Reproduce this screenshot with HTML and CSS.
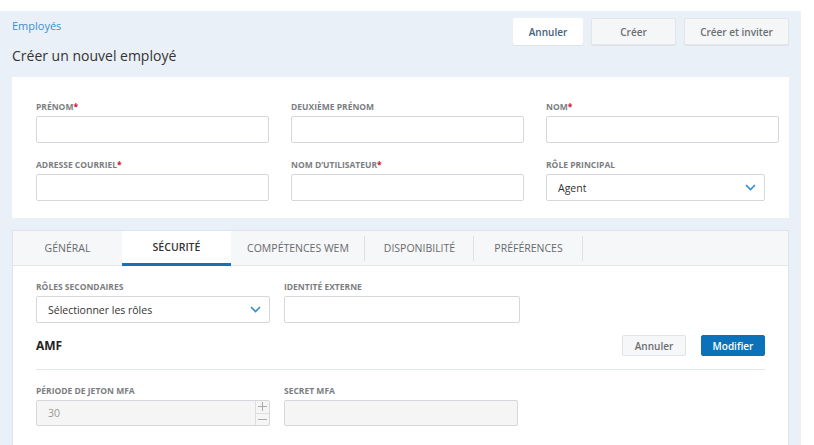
FILE: index.html
```html
<!DOCTYPE html>
<html lang="fr">
<head>
<meta charset="utf-8">
<title>Créer un nouvel employé</title>
<link rel="stylesheet" href="styles.css">
</head>
<body>
<div class="page">
  <header class="top">
    <div class="titles">
      <a class="crumb" href="#">Employés</a>
      <h1 class="title">Créer un nouvel employé</h1>
    </div>
    <div class="actions">
      <button class="btn btn-white btn-cancel">Annuler</button>
      <button class="btn btn-grey btn-create">Créer</button>
      <button class="btn btn-grey btn-invite">Créer et inviter</button>
    </div>
  </header>

  <section class="card card-main">
    <div class="grid3">
      <div class="field">
        <label class="lbl">Prénom<span class="req">*</span></label>
        <div class="input"></div>
      </div>
      <div class="field">
        <label class="lbl">Deuxième prénom</label>
        <div class="input"></div>
      </div>
      <div class="field">
        <label class="lbl">Nom<span class="req">*</span></label>
        <div class="input"></div>
      </div>
      <div class="field">
        <label class="lbl">Adresse courriel<span class="req">*</span></label>
        <div class="input"></div>
      </div>
      <div class="field">
        <label class="lbl">Nom d’utilisateur<span class="req">*</span></label>
        <div class="input"></div>
      </div>
      <div class="field">
        <label class="lbl">Rôle principal</label>
        <div class="input select select-role">
          <span class="val">Agent</span>
          <svg class="chev" width="11" height="7" viewBox="0 0 11 7"><path d="M1 1l4.5 4.5L10 1" fill="none" stroke="#2e8fd6" stroke-width="1.6"/></svg>
        </div>
      </div>
    </div>
  </section>

  <section class="card card-tabs">
    <nav class="tabs">
      <div class="tab">Général</div>
      <div class="tab active">Sécurité</div>
      <div class="tab sep wide">Compétences WEM</div>
      <div class="tab sep">Disponibilité</div>
      <div class="tab sep">Préférences</div>
    </nav>
    <div class="tab-body">
      <div class="row2">
        <div class="field f-roles">
          <label class="lbl">Rôles secondaires</label>
          <div class="input select">
            <span class="val">Sélectionner les rôles</span>
            <svg class="chev" width="11" height="7" viewBox="0 0 11 7"><path d="M1 1l4.5 4.5L10 1" fill="none" stroke="#2e8fd6" stroke-width="1.6"/></svg>
          </div>
        </div>
        <div class="field f-ext">
          <label class="lbl">Identité externe</label>
          <div class="input"></div>
        </div>
      </div>
      <div class="amf-row">
        <h2 class="amf">AMF</h2>
        <div class="amf-actions">
          <button class="btn-sm btn-sm-grey">Annuler</button>
          <button class="btn-sm btn-sm-blue">Modifier</button>
        </div>
      </div>
      <hr class="divider">
      <div class="row2">
        <div class="field f-roles">
          <label class="lbl">Période de jeton MFA</label>
          <div class="input disabled spin">
            <span class="val muted">30</span>
            <div class="spinner">
              <span class="sp"><svg width="9" height="9" viewBox="0 0 9 9"><path d="M0 4.5h9M4.5 0v9" stroke="#aaa" stroke-width="1"/></svg></span>
              <span class="sp"><svg width="9" height="9" viewBox="0 0 9 9"><path d="M0 4.5h9" stroke="#aaa" stroke-width="1"/></svg></span>
            </div>
          </div>
        </div>
        <div class="field f-secret">
          <label class="lbl">Secret MFA</label>
          <div class="input disabled"></div>
        </div>
      </div>
    </div>
  </section>
</div>
</body>
</html>
```

FILE: styles.css
```css
* { box-sizing: border-box; }
html, body { margin: 0; padding: 0; background: #fff; }
body {
  font-family: "Open Sans", "Liberation Sans", sans-serif;
  color: #333;
  overflow: hidden;
  height: 445px;
}
.page {
  margin-top: 11px;
  width: 801px;
  height: 434px;
  background: #eaf0f7;
  padding: 0 12px;
}
.top {
  display: flex;
  justify-content: space-between;
  align-items: flex-start;
  height: 66px;
}
.titles { display: flex; flex-direction: column; }
.crumb {
  font-size: 11px;
  color: #3b8fd1;
  text-decoration: none;
  line-height: 16px;
  margin-top: 7px;
}
.title {
  margin: 12px 0 0;
  font-size: 14px;
  font-weight: 400;
  color: #333;
  line-height: 20px;
}
.actions { display: flex; gap: 8px; margin-top: 7px; }
.btn {
  height: 27px;
  border: 1px solid #e3e6e9;
  border-radius: 2px;
  font-family: inherit;
  font-size: 10px;
  font-weight: 600;
  padding: 0;
  box-shadow: 0 1px 1px rgba(0,0,0,0.06);
}
.btn-white { background: #fff; color: #44617a; border-color: #fff; }
.btn-grey { background: #f5f6f7; color: #6b6f73; }
.btn-cancel { width: 70px; }
.btn-create { width: 85px; }
.btn-invite { width: 105px; }

.card { background: #fff; }
.card-main {
  height: 141px;
  padding: 23px 10px 0 24px;
}
.grid3 {
  display: grid;
  grid-template-columns: repeat(3, 233px);
  column-gap: 22px;
  row-gap: 15px;
}
.field { display: flex; flex-direction: column; }
.lbl {
  font-size: 8.5px;
  font-weight: 700;
  text-transform: uppercase;
  color: #7b7e81;
  line-height: 14px;
  margin-bottom: 2px;
}
.req { color: #d0112b; }
.input {
  height: 27px;
  border: 1px solid #d4d8dc;
  border-radius: 2px;
  background: #fff;
  display: flex;
  align-items: center;
  padding: 0 11px;
}
.select { justify-content: space-between; padding-right: 8px; }
.select-role { width: 219px; }
.val { font-size: 10.5px; color: #333; }
.val.muted { color: #999; }
.chev { display: block; }

.card-tabs {
  margin-top: 12px;
  height: 220px;
  border: 1px solid #dfe4ea;
  border-bottom: none;
}
.tabs {
  display: flex;
  height: 35px;
  background: #f6f7f8;
  border-bottom: 1px solid #e4e7ea;
}
.tab {
  width: 109px;
  text-align: center;
  font-size: 10.5px;
  text-transform: uppercase;
  color: #666a6e;
  line-height: 34px;
  position: relative;
}
.tab.wide { width: 134px; }
.tab.active {
  background: #fff;
  color: #333;
  font-weight: 600;
  height: 35px;
  border-bottom: 3px solid #1b6fb5;
  line-height: 32px;
}
.tab.sep::after {
  content: "";
  position: absolute;
  right: 0;
  top: 5px;
  height: 25px;
  border-right: 1px solid #dde1e5;
}
.tab-body { padding: 14px 23px 0 23px; }
.row2 { display: flex; gap: 14px; }
.f-roles { width: 234px; }
.f-ext { width: 236px; }
.f-secret { width: 234px; }
.amf-row {
  display: flex;
  justify-content: space-between;
  align-items: center;
  margin-top: 12px;
  height: 21px;
}
.amf { margin: 0; font-size: 12px; font-weight: 700; color: #222; }
.amf-actions { display: flex; gap: 15px; }
.btn-sm {
  height: 21px;
  width: 64px;
  font-family: inherit;
  font-size: 10px;
  font-weight: 600;
  border-radius: 2px;
  padding: 0;
}
.btn-sm-grey { background: #f6f7f8; border: 1px solid #e1e4e7; color: #6b6f73; }
.btn-sm-blue { background: #0b72b9; border: 1px solid #0b72b9; color: #fff; }
.divider {
  margin: 13px 0 0;
  border: 0;
  border-top: 1px solid #e3e8ee;
}
.tab-body .divider + .row2 { margin-top: 14px; }
.input.disabled { background: #f5f5f5; height: 26px; }
.spin { padding-right: 0; justify-content: space-between; }
.spinner {
  width: 14px;
  height: 100%;
  border-left: 1px solid #dcdfe2;
  display: flex;
  flex-direction: column;
}
.sp {
  flex: 1;
  display: flex;
  align-items: center;
  justify-content: center;
}
.sp svg { display: block; }
.sp + .sp { border-top: 1px solid #dcdfe2; }
```
